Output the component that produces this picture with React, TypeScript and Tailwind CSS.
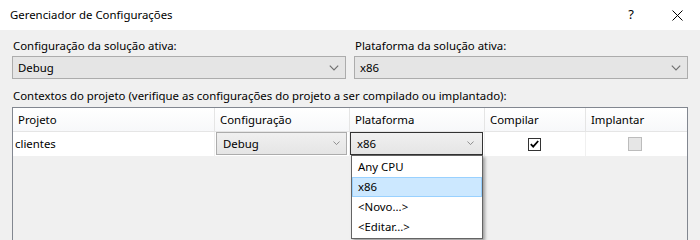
import React from "react";

const font = "[font-family:'Segoe_UI','Noto_Sans',sans-serif]";

function Chevron({ size = 8, color = "#606060" }: { size?: number; color?: string }) {
  return (
    <svg width={size} height={size / 2 + 1} viewBox="0 0 8 5" fill="none">
      <path d="M0.5 0.5L4 4L7.5 0.5" stroke={color} strokeWidth="1" />
    </svg>
  );
}

function Combo({ value }: { value: string }) {
  return (
    <div className="h-[23px] flex items-center justify-between border border-[#acacac] bg-[#e5e5e5] pl-[5px] pr-[6px] text-black">
      <span>{value}</span>
      <Chevron size={10} color="#707070" />
    </div>
  );
}

function HeaderCell({ label, last }: { label: string; last?: boolean }) {
  return (
    <div
      className={
        "h-[23px] flex items-center pl-[5px] bg-gradient-to-b from-white to-[#f7f8fa] " +
        (last ? "" : "border-r border-[#e5e5e5]")
      }
    >
      {label}
    </div>
  );
}

const options = ["Any CPU", "x86", "<Novo...>", "<Editar...>"];

export default function App() {
  return (
    <div className={`w-[700px] h-[240px] overflow-hidden bg-[#f0f0f0] flex flex-col text-[11.4px] text-black ${font}`}>
      {/* title bar */}
      <div className="h-[30px] shrink-0 bg-white flex items-center pl-[10px]">
        <span className="flex-1">Gerenciador de Configurações</span>
        <span className="w-[46px] text-center text-[13px]">?</span>
        <span className="w-[46px] flex justify-center">
          <svg width="11" height="11" viewBox="0 0 11 11" stroke="#000" strokeWidth="1">
            <path d="M0.5 0.5L10.5 10.5M10.5 0.5L0.5 10.5" />
          </svg>
        </span>
      </div>

      <div className="px-[12px] pt-[8px] flex flex-col">
        <div className="grid grid-cols-2 gap-x-[8px]">
          <div>
            <div className="h-[18px] leading-[16px] pl-[1px]">Configuração da solução ativa:</div>
            <Combo value="Debug" />
          </div>
          <div>
            <div className="h-[18px] leading-[16px] pl-[1px]">Plataforma da solução ativa:</div>
            <Combo value="x86" />
          </div>
        </div>

        <div className="mt-[9px] h-[19px] leading-[16px] pl-[1px]">
          Contextos do projeto (verifique as configurações do projeto a ser compilado ou implantado):
        </div>

        {/* grid */}
        <div className="h-[140px] border border-[#828790] bg-[#f0f0f0]">
          <div className="grid grid-cols-[202px_135px_135px_101px_101px] border-b border-[#e5e5e5]">
            <HeaderCell label="Projeto" />
            <HeaderCell label="Configuração" />
            <HeaderCell label="Plataforma" />
            <HeaderCell label="Compilar" />
            <HeaderCell label="Implantar" last />
          </div>
          <div className="grid grid-cols-[202px_135px_135px_101px_100px] bg-white h-[24px]">
            <div className="flex items-center pl-[2px] border-r border-[#f0f0f0]">clientes</div>
            <div className="pl-[1px] pr-[2px] border-r border-[#f0f0f0]">
              <div className="h-[23px] flex items-center justify-between border border-[#acacac] bg-gradient-to-b from-[#f0f0f0] to-[#e5e5e5] pl-[6px] pr-[6px]">
                <span>Debug</span>
                <Chevron size={7} color="#808080" />
              </div>
            </div>
            <div className="relative pr-[1px] border-r border-[#f0f0f0]">
              <div className="h-[23px] flex items-center justify-between border border-[#333333] bg-gradient-to-b from-[#f0f0f0] to-[#e5e5e5] pl-[6px] pr-[8px]">
                <span>x86</span>
                <Chevron size={7} color="#808080" />
              </div>
              <div className="absolute left-[1px] top-[23px] w-[132px] z-10 bg-white border border-[#646464] shadow-[2px_2px_3px_rgba(0,0,0,0.35)] py-[1px]">
                {options.map((o) => (
                  <div
                    key={o}
                    className={
                      "h-[20px] flex items-center pl-[5px] border " +
                      (o === "x86" ? "bg-[#cce8ff] border-[#99d1ff]" : "border-transparent")
                    }
                  >
                    {o}
                  </div>
                ))}
              </div>
            </div>
            <div className="flex items-center justify-center border-r border-[#f0f0f0] pr-[2px]">
              <div className="w-[13px] h-[13px] border border-[#333333] bg-white flex items-center justify-center">
                <svg width="9" height="8" viewBox="0 0 9 8" fill="none">
                  <path d="M0.8 4.2L3.2 6.6L8.2 1" stroke="#000" strokeWidth="1.8" />
                </svg>
              </div>
            </div>
            <div className="flex items-center justify-center pr-[2px]">
              <div className="w-[14px] h-[14px] border border-[#bcbcbc] bg-[#e6e6e6]" />
            </div>
          </div>
        </div>
      </div>
    </div>
  );
}
